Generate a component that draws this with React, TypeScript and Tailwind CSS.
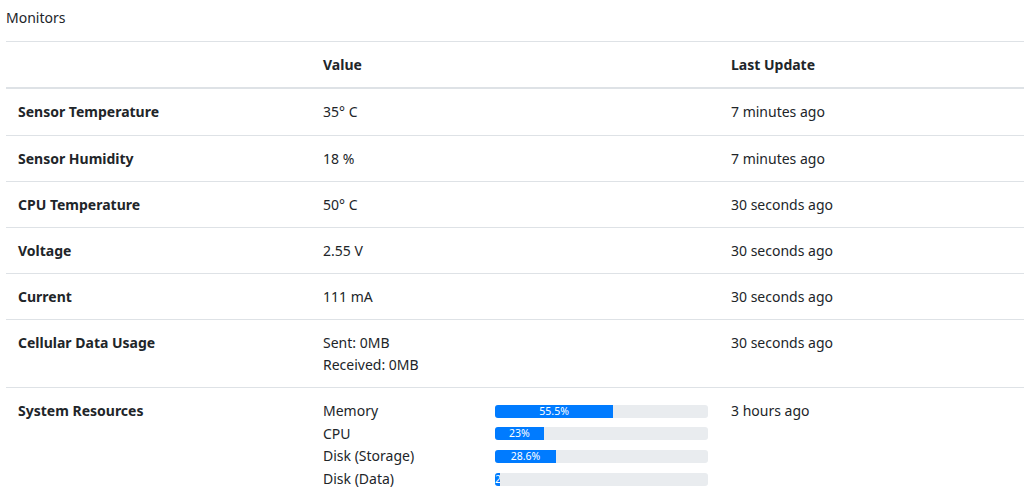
import React from "react";

type Row = { label: string; value: React.ReactNode; updated: string };

const resources = [
  { name: "Memory", pct: 55.5, label: "55.5%" },
  { name: "CPU", pct: 23, label: "23%" },
  { name: "Disk (Storage)", pct: 28.6, label: "28.6%" },
  { name: "Disk (Data)", pct: 2.4, label: "2" },
];

function Resources() {
  return (
    <div className="grid grid-cols-[172px_213px] leading-[22.7px]">
      {resources.map((r) => (
        <React.Fragment key={r.name}>
          <div>{r.name}</div>
          <div className="flex items-center">
            <div className="h-[13px] w-full overflow-hidden rounded-[3px] bg-[#e9ecef] flex">
              <div
                className="h-full overflow-hidden bg-[#007bff] text-white text-[10.5px] leading-[13px] text-center whitespace-nowrap"
                style={{ width: `${r.pct}%` }}
              >
                {r.label}
              </div>
            </div>
          </div>
        </React.Fragment>
      ))}
    </div>
  );
}

const rows: Row[] = [
  { label: "Sensor Temperature", value: "35° C", updated: "7 minutes ago" },
  { label: "Sensor Humidity", value: "18 %", updated: "7 minutes ago" },
  { label: "CPU Temperature", value: "50° C", updated: "30 seconds ago" },
  { label: "Voltage", value: "2.55 V", updated: "30 seconds ago" },
  { label: "Current", value: "111 mA", updated: "30 seconds ago" },
  {
    label: "Cellular Data Usage",
    value: (
      <>
        <div>Sent: 0MB</div>
        <div>Received: 0MB</div>
      </>
    ),
    updated: "30 seconds ago",
  },
  { label: "System Resources", value: <Resources />, updated: "3 hours ago" },
];

export default function App() {
  return (
    <div
      className="bg-white text-[#212529] text-[14px] leading-[21.2px] pl-[6px] pt-[7px]"
      style={{ fontFamily: '"Noto Sans", sans-serif' }}
    >
      <div className="pb-[13px]">Monitors</div>
      <table className="w-full table-fixed border-collapse text-left">
        <thead>
          <tr className="border-t border-[#dee2e6] border-b-2">
            <th className="w-[305px] px-3 py-3 font-bold"></th>
            <th className="w-[408px] px-3 py-3 font-bold">Value</th>
            <th className="px-3 py-3 font-bold">Last Update</th>
          </tr>
        </thead>
        <tbody>
          {rows.map((r) => (
            <tr key={r.label} className="border-t border-[#dee2e6] align-top">
              <td className="px-3 py-3 font-bold">{r.label}</td>
              <td className="px-3 py-3">{r.value}</td>
              <td className="px-3 py-3">{r.updated}</td>
            </tr>
          ))}
        </tbody>
      </table>
    </div>
  );
}
